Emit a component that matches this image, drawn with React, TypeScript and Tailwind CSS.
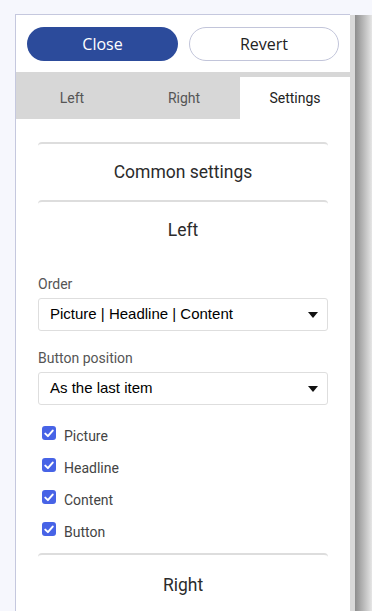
import React from "react";

function Caret() {
  return (
    <svg width="10" height="6" viewBox="0 0 10 6" className="shrink-0">
      <path d="M0 0 L10 0 L5 6 Z" fill="#111" />
    </svg>
  );
}

function Select({ value }: { value: string }) {
  return (
    <div className="flex h-[33px] items-center justify-between rounded-[3px] border border-[#dedede] bg-white pl-[11px] pr-[9px]">
      <span className="font-['Liberation_Sans',Arial,sans-serif] text-[15px] text-black">{value}</span>
      <Caret />
    </div>
  );
}

function Check({ label }: { label: string }) {
  return (
    <div className="flex h-[32px] items-center pl-[4px]">
      <span className="mb-[6px] flex h-[14px] w-[14px] items-center justify-center rounded-[3px] bg-[#4763e6]">
        <svg width="10" height="9" viewBox="0 0 10 9">
          <path d="M1.3 4.6 L3.9 7.1 L8.7 1.6" fill="none" stroke="#fff" strokeWidth="2" strokeLinecap="round" strokeLinejoin="round" />
        </svg>
      </span>
      <span className="ml-[8px] text-[14px] text-[#444]">{label}</span>
    </div>
  );
}

function SectionHeader({ title, tall }: { title: string; tall?: boolean }) {
  return (
    <div
      className={
        tall
          ? "flex h-[62px] items-center justify-center rounded-t-[4px] border-t-2 border-[#dddddd] text-[17.5px] text-[#2b2b2b]"
          : "flex h-[58px] items-center justify-center rounded-t-[4px] border-t-2 border-[#dddddd] text-[17.5px] text-[#2b2b2b]"
      }
    >
      {title}
    </div>
  );
}

export default function App() {
  return (
    <div className="flex min-h-[611px] bg-[#f6f7fd] pl-[15px] pt-[14px] font-['Roboto','Noto_Sans',sans-serif]">
      <div className="flex w-[335px] flex-col border-l border-t border-[#c5c8de] bg-white">
        <div className="flex gap-[11px] px-[11px] pb-[11px] pt-[12px]">
          <button className="h-[34px] w-[151px] rounded-full bg-[#2c4b9b] font-['Open_Sans',sans-serif] text-[16px] text-white">
            Close
          </button>
          <button className="h-[34px] flex-1 rounded-full border border-[#c2c5da] bg-white font-['Open_Sans',sans-serif] text-[16px] text-[#222]">
            Revert
          </button>
        </div>
        <div className="grid h-[47px] grid-cols-[112px_112px_1fr] bg-[#d7d7d7] pt-[5px] text-[14px]">
          <div className="flex items-center justify-center text-[#555]">Left</div>
          <div className="flex items-center justify-center text-[#555]">Right</div>
          <div className="flex items-center justify-center bg-white text-[#222]">Settings</div>
        </div>
        <div className="flex flex-col px-[22px] pt-[23px]">
          <SectionHeader title="Common settings" />
          <SectionHeader title="Left" />
          <div className="mt-[16px] text-[14px] text-[#555]">Order</div>
          <div className="mt-[3px]">
            <Select value="Picture | Headline | Content" />
          </div>
          <div className="mt-[17px] text-[14px] text-[#555]">Button position</div>
          <div className="mt-[3px]">
            <Select value="As the last item" />
          </div>
          <div className="mt-[15px] flex flex-col">
            <Check label="Picture" />
            <Check label="Headline" />
            <Check label="Content" />
            <Check label="Button" />
          </div>
          <div className="mt-[5px]">
            <SectionHeader title="Right" tall />
          </div>
        </div>
      </div>
      <div className="mt-[1px] w-[5px] bg-[#dadada]" />
      <div className="mt-[1px] flex-1 bg-gradient-to-r from-[#8e8e8e] to-[#e6e6e6]" />
    </div>
  );
}
